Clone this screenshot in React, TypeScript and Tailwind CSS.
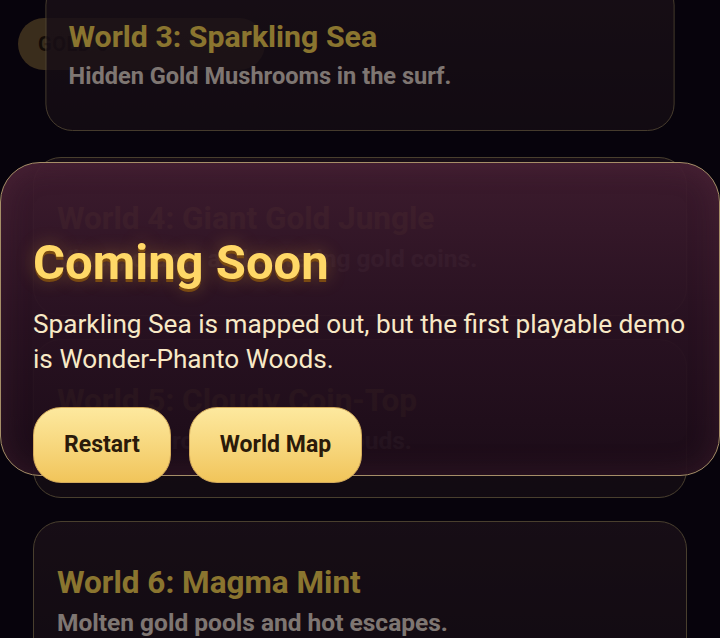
import React from 'react'

type World = {
  id: number
  name: string
  blurb: string
}

const worlds: World[] = [
  { id: 3, name: 'Sparkling Sea', blurb: 'Hidden Gold Mushrooms in the surf.' },
  { id: 4, name: 'Giant Gold Jungle', blurb: 'Vines, drums and towering gold coins.' },
  { id: 5, name: 'Cloudy Coin-Top', blurb: 'Bounce across glittering clouds.' },
  { id: 6, name: 'Magma Mint', blurb: 'Molten gold pools and hot escapes.' },
]

function WorldCard({ world, selected }: { world: World; selected?: boolean }) {
  return (
    <div
      className={`flex h-[159px] w-full flex-col justify-center gap-[6px] rounded-[28px] border border-[#857355] bg-gradient-to-b from-[#2f1d2b]/85 to-[#251623]/85 px-[23px] ${selected ? 'scale-[0.962]' : ''}`}
    >
      <h3 className="text-[31.5px] font-bold leading-[38px] text-[#fbd657]">
        World {world.id}: {world.name}
      </h3>
      <p className="text-[24.5px] font-bold leading-[30px] text-[#e6d8d0]">{world.blurb}</p>
    </div>
  )
}

export default function App() {
  return (
    <div className="relative h-[638px] w-[720px] overflow-hidden bg-[#0d0616] font-['Roboto','Liberation_Sans',sans-serif]">
      {/* --- HUD pill (sits under the list) --- */}
      <div className="absolute left-[18px] top-[18px] flex h-[52px] w-[247px] items-center rounded-full bg-[#6b5234] px-5 text-[20px] font-bold tracking-wide text-[#24160e]">
        GOLD 0
      </div>

      {/* --- World list, scrolled --- */}
      <div className="relative mt-[-25px] flex flex-col gap-[23px] px-[33px]">
        {worlds.map((w) => (
          <WorldCard key={w.id} world={w} selected={w.id === 3} />
        ))}
      </div>

      {/* --- Dim --- */}
      <div className="absolute inset-0 bg-black/45" />

      {/* --- Modal --- */}
      <div className="absolute inset-0 flex items-center">
        <div className="h-[314px] w-full rounded-[40px] border-[1.5px] border-[#a68e68] bg-gradient-to-b from-[#3f1c2f]/[0.94] via-[#2a1222]/[0.94] to-[#1c0c18]/[0.94] pl-8 pr-6 pt-[74px] shadow-[inset_0_0_30px_rgba(120,60,80,0.25)]">
          <h2 className="text-[49px] font-bold leading-[52px] text-[#ffd867] [text-shadow:0_3px_0_#7a4a12,0_0_18px_rgba(255,190,60,0.35)]">
            Coming Soon
          </h2>
          <p className="mt-[18px] text-[26.2px] leading-[35px] text-[#f8e9c6]">
            Sparkling Sea is mapped out, but the first playable demo is Wonder-Phanto Woods.
          </p>
          <div className="mt-[30px] flex gap-[18px]">
            <button className="h-[76px] rounded-[28px] border border-[#d4ab5c] bg-gradient-to-b from-[#fde99e] to-[#f1c55a] px-[30px] text-[23px] font-bold text-[#2b1a0a]">
              Restart
            </button>
            <button className="h-[76px] rounded-[28px] border border-[#d4ab5c] bg-gradient-to-b from-[#fde99e] to-[#f1c55a] px-[30px] text-[23px] font-bold text-[#2b1a0a]">
              World Map
            </button>
          </div>
        </div>
      </div>
    </div>
  )
}
